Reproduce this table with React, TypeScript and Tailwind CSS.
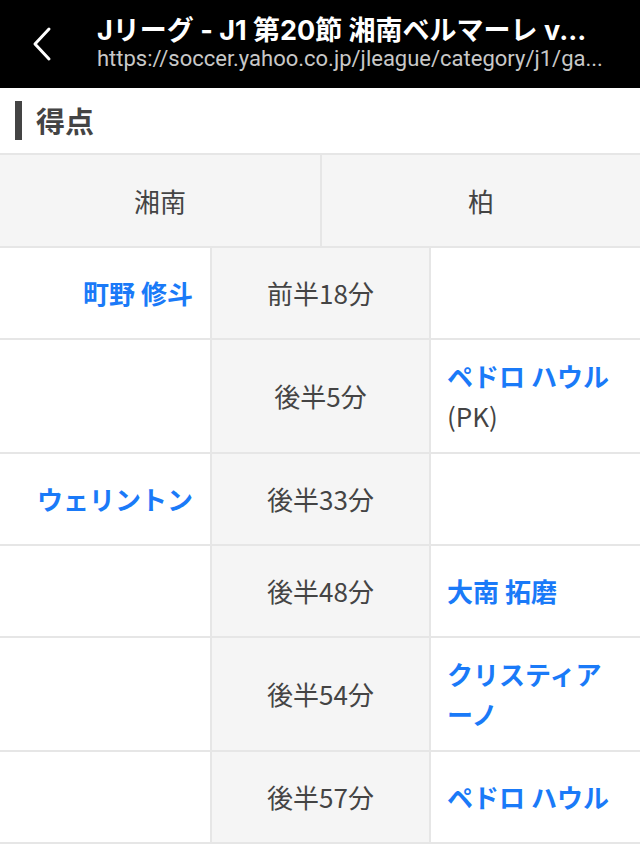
import React from "react";

type Goal = {
  home?: string;
  away?: string;
  time: string;
  note?: string;
};

const goals: Goal[] = [
  { home: "町野 修斗", time: "前半18分" },
  { away: "ペドロ ハウル", note: "(PK)", time: "後半5分" },
  { home: "ウェリントン", time: "後半33分" },
  { away: "大南 拓磨", time: "後半48分" },
  { away: "クリスティアーノ", time: "後半54分" },
  { away: "ペドロ ハウル", time: "後半57分" },
];

const font = "font-['Noto_Sans_CJK_JP','Noto_Sans',sans-serif]";

export default function App() {
  return (
    <div className={`w-[640px] min-h-[854px] bg-white ${font}`}>
      {/* Top bar */}
      <div className="h-[88px] bg-black flex items-center">
        <div className="w-[97px] flex items-center justify-center pr-[14px]">
          <svg width="22" height="36" viewBox="0 0 22 36" fill="none">
            <path d="M18 3 L4 18 L18 33" stroke="white" strokeWidth="3" strokeLinecap="round" strokeLinejoin="round" />
          </svg>
        </div>
        <div className="flex flex-col">
          <p className="text-white text-[27px] font-bold leading-[30px] whitespace-nowrap font-['Inter','Noto_Sans_CJK_JP',sans-serif]">
            Jリーグ - J1 第20節 湘南ベルマーレ v...
          </p>
          <p className="text-[#c8c8c8] text-[22px] leading-[26px] whitespace-nowrap font-['Roboto','Noto_Sans',sans-serif]">
            https://soccer.yahoo.co.jp/jleague/category/j1/ga...
          </p>
        </div>
      </div>

      {/* Section title */}
      <div className="flex items-center h-[65px] pl-[15px]">
        <div className="w-[7px] h-[39px] bg-[#444]" />
        <h2 className="ml-[14px] text-[29px] font-bold text-[#444] leading-none">得点</h2>
      </div>

      {/* Score table */}
      <div className="border-t-2 border-[#e6e6e6]">
        <div className="grid grid-cols-2 bg-[#f5f5f5] border-b-2 border-[#e6e6e6] h-[93px] text-[26px] text-[#444]">
          <div className="flex items-center justify-center">湘南</div>
          <div className="flex items-center justify-center border-l-2 border-[#e6e6e6]">柏</div>
        </div>

        {goals.map((g, idx) => (
          <div
            key={idx}
            className="grid grid-cols-[210px_219px_1fr] border-b-2 border-[#e6e6e6] text-[26px] leading-[40px]"
          >
            <div className="min-h-[90px] py-4 pr-[17px] flex items-center justify-end text-right font-bold text-[#1a7af8]">
              {g.home}
            </div>
            <div className="min-h-[90px] py-4 flex items-center justify-center bg-[#f5f5f5] border-l-2 border-[#e6e6e6] text-[#444]">
              {g.time}
            </div>
            <div className="min-h-[90px] py-4 pl-[16px] pr-[24px] flex flex-col justify-center border-l-2 border-[#e6e6e6]">
              {g.away && <span className="font-bold text-[#1a7af8]">{g.away}</span>}
              {g.note && <span className="text-[#444]">{g.note}</span>}
            </div>
          </div>
        ))}
      </div>
    </div>
  );
}
